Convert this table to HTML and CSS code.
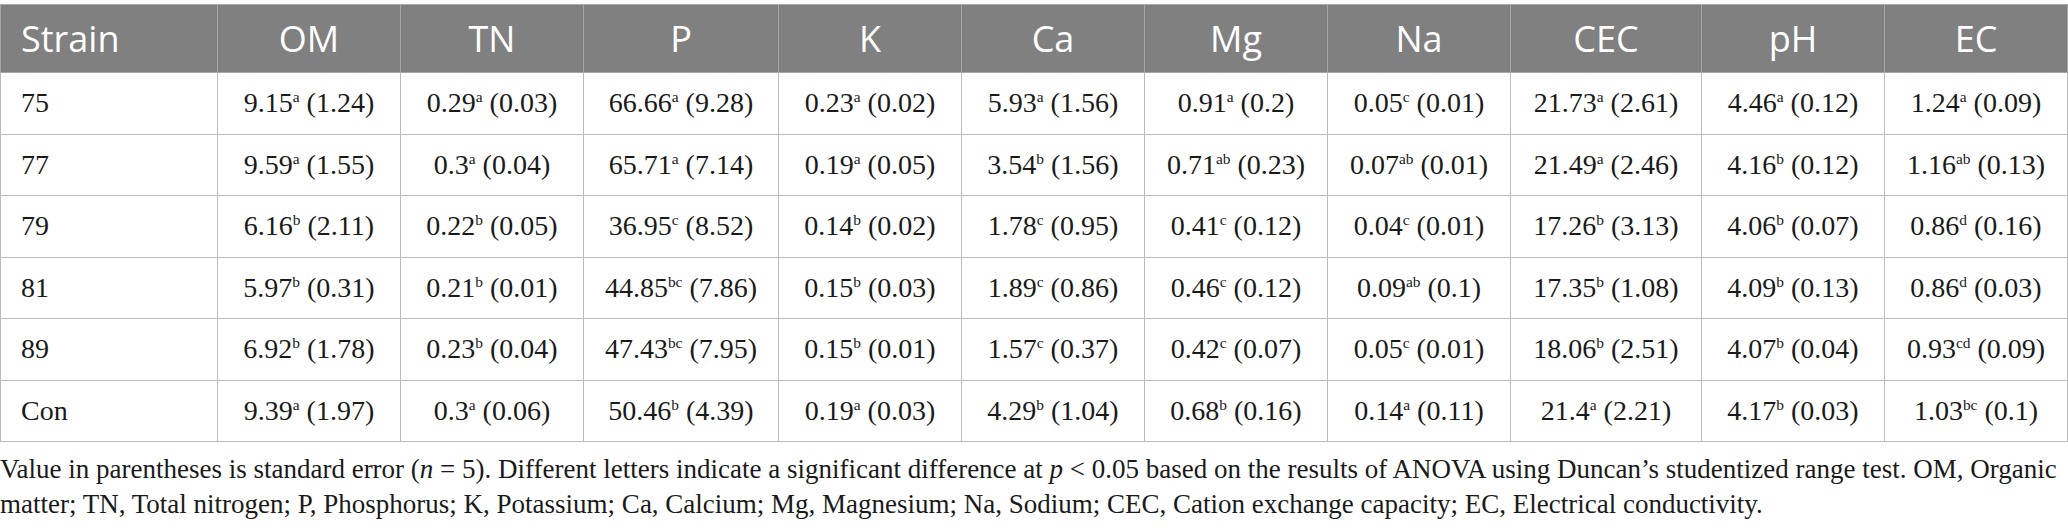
FILE: index.html
```html
<!DOCTYPE html>
<html>
<head>
<meta charset="utf-8">
<link rel="stylesheet" href="styles.css">
</head>
<body>
<div class="page">
<table class="data">
<colgroup>
<col class="c-strain"><col class="c-std"><col class="c-std"><col class="c-wide"><col class="c-std"><col class="c-std"><col class="c-std"><col class="c-std"><col class="c-cec"><col class="c-std"><col class="c-std">
</colgroup>
<thead>
<tr><th class="left">Strain</th><th>OM</th><th>TN</th><th>P</th><th>K</th><th>Ca</th><th>Mg</th><th>Na</th><th>CEC</th><th>pH</th><th>EC</th></tr>
</thead>
<tbody>
<tr><td class="left">75</td><td>9.15<sup>a</sup> (1.24)</td><td>0.29<sup>a</sup> (0.03)</td><td>66.66<sup>a</sup> (9.28)</td><td>0.23<sup>a</sup> (0.02)</td><td>5.93<sup>a</sup> (1.56)</td><td>0.91<sup>a</sup> (0.2)</td><td>0.05<sup>c</sup> (0.01)</td><td>21.73<sup>a</sup> (2.61)</td><td>4.46<sup>a</sup> (0.12)</td><td>1.24<sup>a</sup> (0.09)</td></tr>
<tr><td class="left">77</td><td>9.59<sup>a</sup> (1.55)</td><td>0.3<sup>a</sup> (0.04)</td><td>65.71<sup>a</sup> (7.14)</td><td>0.19<sup>a</sup> (0.05)</td><td>3.54<sup>b</sup> (1.56)</td><td>0.71<sup>ab</sup> (0.23)</td><td>0.07<sup>ab</sup> (0.01)</td><td>21.49<sup>a</sup> (2.46)</td><td>4.16<sup>b</sup> (0.12)</td><td>1.16<sup>ab</sup> (0.13)</td></tr>
<tr><td class="left">79</td><td>6.16<sup>b</sup> (2.11)</td><td>0.22<sup>b</sup> (0.05)</td><td>36.95<sup>c</sup> (8.52)</td><td>0.14<sup>b</sup> (0.02)</td><td>1.78<sup>c</sup> (0.95)</td><td>0.41<sup>c</sup> (0.12)</td><td>0.04<sup>c</sup> (0.01)</td><td>17.26<sup>b</sup> (3.13)</td><td>4.06<sup>b</sup> (0.07)</td><td>0.86<sup>d</sup> (0.16)</td></tr>
<tr><td class="left">81</td><td>5.97<sup>b</sup> (0.31)</td><td>0.21<sup>b</sup> (0.01)</td><td>44.85<sup>bc</sup> (7.86)</td><td>0.15<sup>b</sup> (0.03)</td><td>1.89<sup>c</sup> (0.86)</td><td>0.46<sup>c</sup> (0.12)</td><td>0.09<sup>ab</sup> (0.1)</td><td>17.35<sup>b</sup> (1.08)</td><td>4.09<sup>b</sup> (0.13)</td><td>0.86<sup>d</sup> (0.03)</td></tr>
<tr><td class="left">89</td><td>6.92<sup>b</sup> (1.78)</td><td>0.23<sup>b</sup> (0.04)</td><td>47.43<sup>bc</sup> (7.95)</td><td>0.15<sup>b</sup> (0.01)</td><td>1.57<sup>c</sup> (0.37)</td><td>0.42<sup>c</sup> (0.07)</td><td>0.05<sup>c</sup> (0.01)</td><td>18.06<sup>b</sup> (2.51)</td><td>4.07<sup>b</sup> (0.04)</td><td>0.93<sup>cd</sup> (0.09)</td></tr>
<tr><td class="left">Con</td><td>9.39<sup>a</sup> (1.97)</td><td>0.3<sup>a</sup> (0.06)</td><td>50.46<sup>b</sup> (4.39)</td><td>0.19<sup>a</sup> (0.03)</td><td>4.29<sup>b</sup> (1.04)</td><td>0.68<sup>b</sup> (0.16)</td><td>0.14<sup>a</sup> (0.11)</td><td>21.4<sup>a</sup> (2.21)</td><td>4.17<sup>b</sup> (0.03)</td><td>1.03<sup>bc</sup> (0.1)</td></tr>
</tbody>
</table>
<p class="note">Value in parentheses is standard error (<i>n</i> = 5). Different letters indicate a significant difference at <i>p</i> &lt; 0.05 based on the results of ANOVA using Duncan’s studentized range test. OM, Organic matter; TN, Total nitrogen; P, Phosphorus; K, Potassium; Ca, Calcium; Mg, Magnesium; Na, Sodium; CEC, Cation exchange capacity; EC, Electrical conductivity.</p>
</div>
</body>
</html>
```
FILE: styles.css
```css
html, body {
  margin: 0;
  padding: 0;
  background: #ffffff;
}

.page {
  padding-top: 4px;
  width: 2068px;
}

.data {
  border-collapse: collapse;
  table-layout: fixed;
  width: 2067px;
}

.c-strain { width: 217px; }
.c-std { width: 183px; }
.c-wide { width: 195px; }
.c-cec { width: 191px; }

.data th,
.data td {
  border: 1px solid #bcbcbc;
  text-align: center;
  padding: 0;
  white-space: nowrap;
}

.data th {
  background: #808080;
  color: #ffffff;
  font-family: "Open Sans", "Noto Sans", sans-serif;
  font-weight: 400;
  font-size: 36px;
  height: 67px;
  border-color: #a6a6a6;
}

.data td {
  font-family: "Liberation Serif", "Times New Roman", serif;
  font-size: 28px;
  color: #1a1a1a;
  height: 60.5px;
}

.data .left {
  text-align: left;
  padding-left: 20px;
}

.data sup {
  font-size: 0.55em;
  line-height: 0;
  vertical-align: 0.65em;
}

.note {
  margin: 10px 0 0 0;
  font-family: "Liberation Serif", "Times New Roman", serif;
  font-size: 27px;
  line-height: 35px;
  color: #1a1a1a;
}
```
